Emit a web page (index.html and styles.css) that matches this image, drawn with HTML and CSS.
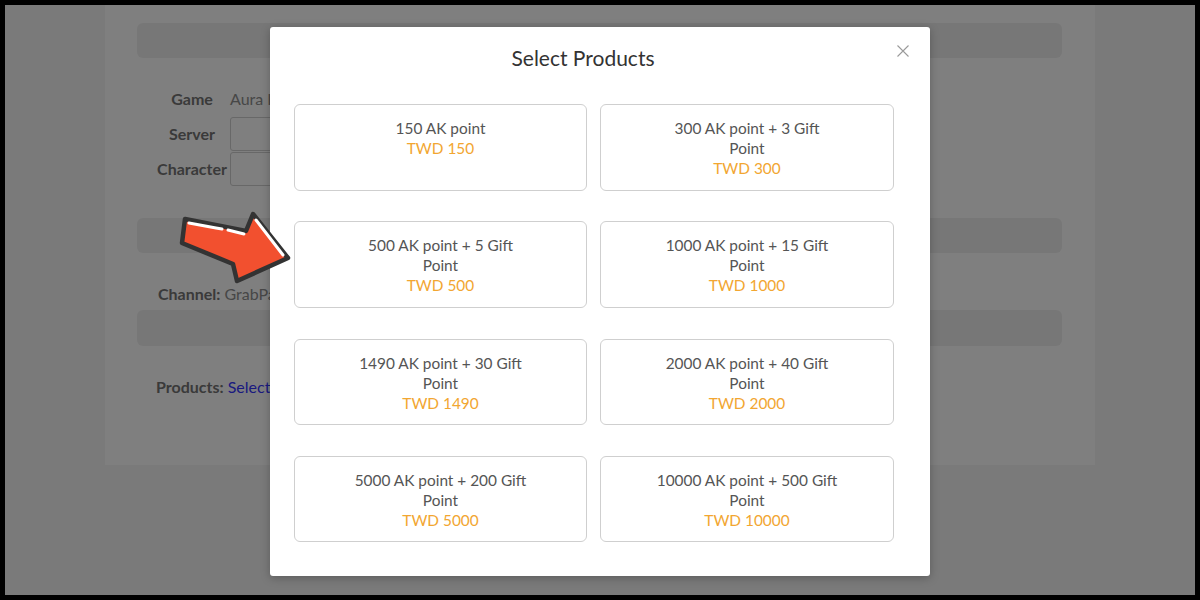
FILE: index.html
```html
<!DOCTYPE html>
<html>
<head>
<meta charset="utf-8">
<link rel="stylesheet" href="styles.css">
</head>
<body>
<div class="frame">
  <div class="page">
    <div class="card">
      <div class="bar"></div>
      <div class="form">
        <div class="row"><span class="label">Game</span><span class="value">Aura Kingdom</span></div>
        <div class="row"><span class="label">Server</span><span class="input"></span></div>
        <div class="row"><span class="label">Character</span><span class="input"></span></div>
      </div>
      <div class="bar bar-2"></div>
      <div class="line line-channel"><b>Channel:</b> GrabPay</div>
      <div class="bar bar-3"></div>
      <div class="line line-products"><b>Products:</b> <a class="link">Select Products</a></div>
    </div>
  </div>

  <div class="overlay">
    <div class="modal">
      <div class="modal-title">Select Products</div>
      <svg class="close" width="12" height="12" viewBox="0 0 12 12"><path d="M0.5 0.5 L11.5 11.5 M11.5 0.5 L0.5 11.5" stroke="#9a9a9a" stroke-width="1.1" fill="none"/></svg>
      <div class="grid">
        <div class="item"><div class="name">150 AK point</div><div class="price">TWD 150</div></div>
        <div class="item"><div class="name">300 AK point + 3 Gift<br>Point</div><div class="price">TWD 300</div></div>
        <div class="item"><div class="name">500 AK point + 5 Gift<br>Point</div><div class="price">TWD 500</div></div>
        <div class="item"><div class="name">1000 AK point + 15 Gift<br>Point</div><div class="price">TWD 1000</div></div>
        <div class="item"><div class="name">1490 AK point + 30 Gift<br>Point</div><div class="price">TWD 1490</div></div>
        <div class="item"><div class="name">2000 AK point + 40 Gift<br>Point</div><div class="price">TWD 2000</div></div>
        <div class="item"><div class="name">5000 AK point + 200 Gift<br>Point</div><div class="price">TWD 5000</div></div>
        <div class="item"><div class="name">10000 AK point + 500 Gift<br>Point</div><div class="price">TWD 10000</div></div>
      </div>
    </div>
  </div>

  <svg class="arrow" width="130" height="90" viewBox="0 0 130 90">
    <polygon points="15,14 76,26 83,9 118,53 67,76 63,59 12,38" fill="#f2502f" stroke="#333" stroke-width="4.5" stroke-linejoin="round"/>
    <polyline points="19,18 46,23 52,24" fill="none" stroke="#fff" stroke-width="3" stroke-linecap="round"/>
    <polyline points="58,25 74,29" fill="none" stroke="#fff" stroke-width="3" stroke-linecap="round"/>
    <polyline points="86,15 113,50" fill="none" stroke="#fff" stroke-width="3" stroke-linecap="round"/>
  </svg>
</div>
</body>
</html>
```

FILE: styles.css
```css
* { box-sizing: border-box; }
html, body { margin: 0; padding: 0; }
body {
  background: #000;
  width: 1200px;
  height: 600px;
  padding: 5px;
  font-family: Lato, "Noto Sans", sans-serif;
}
.frame {
  position: relative;
  width: 1190px;
  height: 590px;
  overflow: hidden;
  background: #f5f5f5;
}
.page {
  padding-left: 100px;
}
.card {
  width: 990px;
  height: 460px;
  background: #fff;
  padding: 18px 33px 0 32px;
}
.bar {
  height: 35px;
  background: #efefef;
  border-radius: 6px;
}
.form {
  margin-top: 23px;
  padding-left: 17px;
}
.row {
  display: flex;
  align-items: center;
  height: 35px;
}
.label {
  width: 76px;
  text-align: center;
  font-weight: bold;
  font-size: 16px;
  color: #747474;
}
.value {
  font-size: 16px;
  color: #8e8e8e;
}
.input {
  width: 300px;
  height: 34px;
  border: 1px solid #d0d0d0;
  border-radius: 3px;
  background: #fff;
}
.bar-2 { margin-top: 32px; }
.line {
  height: 24px;
  line-height: 24px;
  font-size: 16px;
  color: #8e8e8e;
}
.line b { color: #747474; }
.line-channel { margin-top: 29px; padding-left: 21px; }
.bar-3 { margin-top: 4px; height: 36px; }
.line-products { margin-top: 29px; padding-left: 19px; }
.link { color: #3535ff; }

.overlay {
  position: absolute;
  inset: 0;
  background: rgba(0, 0, 0, 0.5);
  display: flex;
  justify-content: center;
  align-items: flex-start;
  padding-top: 22px;
}
.modal {
  position: relative;
  width: 660px;
  height: 549px;
  background: #fff;
  border-radius: 3px;
  box-shadow: 0 2px 10px rgba(0,0,0,0.25);
  padding: 16px 36px 0 24px;
}
.modal-title {
  height: 30px;
  line-height: 30px;
  font-size: 21px;
  color: #333;
  text-align: center;
  padding-right: 22px;
}
.close {
  position: absolute;
  left: 627px;
  top: 18px;
}
.grid {
  margin-top: 31px;
  display: grid;
  grid-template-columns: 293px 294px;
  column-gap: 13px;
  row-gap: 30.8px;
}
.item {
  height: 86.5px;
  border: 1px solid #cfcfcf;
  border-radius: 6px;
  padding: 13px 0 11px;
  text-align: center;
  font-size: 15.4px;
  line-height: 20px;
}
.name { color: #555; }
.price { color: #f2a631; }

.arrow {
  position: absolute;
  left: 165px;
  top: 200px;
}
```
